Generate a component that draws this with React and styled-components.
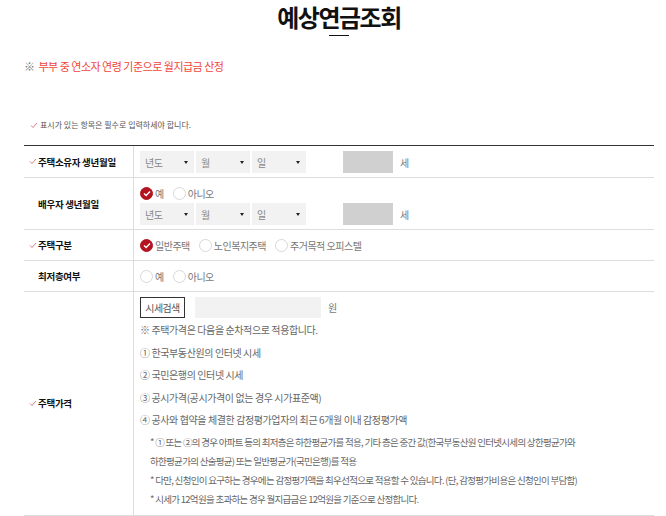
import styled, { createGlobalStyle } from "styled-components";

const GlobalStyle = createGlobalStyle`
  body {
    margin: 0;
    background: #fff;
    font-family: "Noto Sans CJK KR", "Noto Sans", sans-serif;
    color: #666;
  }
`;

const Page = styled.div`
  padding: 0 12px 0 24px;
`;

const Title = styled.h1`
  margin: 0;
  padding-top: 2px;
  text-align: center;
  font-size: 24px;
  line-height: 30px;
  font-weight: 700;
  letter-spacing: -1.5px;
  color: #111;

  &::after {
    content: "";
    display: block;
    width: 20px;
    height: 1px;
    background: #111;
    margin: 3px auto 0;
  }
`;

const Notice = styled.p`
  margin: 22px 0 0;
  font-size: 11px;
  line-height: 16px;
  letter-spacing: -0.5px;
  color: #f0473a;

  span {
    color: #777;
    margin-right: 4px;
  }
`;

const Required = styled.p`
  margin: 45px 0 0;
  display: flex;
  align-items: center;
  gap: 2px;
  padding-left: 6px;
  font-size: 8px;
  line-height: 12px;
  letter-spacing: 0;
  color: #555;
`;

const Table = styled.div`
  margin-top: 14px;
  border-top: 1px solid #333;
`;

const Row = styled.div`
  display: grid;
  grid-template-columns: 110px 1fr;
  border-bottom: 1px solid #ddd;
`;

const Label = styled.div`
  display: flex;
  align-items: center;
  gap: 1px;
  padding-left: 5px;
  border-right: 1px solid #ddd;
  font-size: 9.5px;
  font-weight: 700;
  letter-spacing: -0.3px;
  color: #111;
`;

const Check = styled.svg`
  width: 8px;
  height: 7px;
  flex: none;
  visibility: ${(p) => (p.$show ? "visible" : "hidden")};
`;

const Value = styled.div`
  padding: ${(p) => p.$pad || "5px 0 4px 6px"};
  display: flex;
  flex-direction: column;
  justify-content: center;
  gap: 1px;
  font-size: 10px;
  letter-spacing: -0.4px;
`;

const Line = styled.div`
  display: flex;
  align-items: center;
  gap: ${(p) => p.$gap || "2px"};
  min-height: ${(p) => p.$h || "22px"};
`;

const Select = styled.div`
  width: 54px;
  height: 22px;
  box-sizing: border-box;
  padding: 0 6px 0 5px;
  background: #f2f2f2;
  display: flex;
  align-items: center;
  justify-content: space-between;
  color: #888;

  &::after {
    content: "";
    border-left: 2px solid transparent;
    border-right: 2px solid transparent;
    border-top: 3px solid #222;
  }
`;

const AgeBox = styled.div`
  width: 50px;
  height: 22px;
  margin-left: 35px;
  background: #d0d0d0;
`;

const Unit = styled.span`
  margin-left: 5px;
  color: #777;
`;

const RadioGroup = styled.div`
  display: flex;
  align-items: center;
  gap: 9px;
  min-height: 18px;
`;

const RadioItem = styled.label`
  display: flex;
  align-items: center;
  gap: 2px;
  color: #777;
  letter-spacing: -0.5px;
`;

const Dot = styled.span`
  width: 13px;
  height: 13px;
  box-sizing: border-box;
  border-radius: 50%;
  display: flex;
  align-items: center;
  justify-content: center;
  background: ${(p) => (p.$on ? "#b3141f" : "#fff")};
  border: 1px solid ${(p) => (p.$on ? "#b3141f" : "#d8d8d8")};
`;

const SearchButton = styled.button`
  height: 21px;
  width: 45px;
  box-sizing: border-box;
  padding: 0;
  border: 1px solid #333;
  background: #fff;
  font-family: inherit;
  font-size: 10px;
  letter-spacing: -0.6px;
  color: #555;
`;

const PriceInput = styled.div`
  width: 126px;
  height: 21px;
  margin-left: 8px;
  background: #f2f2f2;
`;

const Notes = styled.div`
  line-height: 22.5px;
  color: #666;
`;

const SubNotes = styled.div`
  padding-left: 10px;
  font-size: 9.5px;
  letter-spacing: -0.7px;
  line-height: 19px;
  white-space: nowrap;
`;

const ReqMark = ({ show = true }) => (
  <Check $show={show} viewBox="0 0 8 7">
    <polyline points="1,3.5 3,5.5 7,1" fill="none" stroke="#c8707b" strokeWidth="0.9" />
  </Check>
);

const Radio = ({ on, children }) => (
  <RadioItem>
    <Dot $on={on}>
      {on && (
        <svg width="8" height="7" viewBox="0 0 8 7">
          <polyline points="1,3.6 3.1,5.6 7,1.4" fill="none" stroke="#fff" strokeWidth="1.4" />
        </svg>
      )}
    </Dot>
    {children}
  </RadioItem>
);

const DateSelects = () => (
  <Line>
    <Select>년도</Select>
    <Select>월</Select>
    <Select>일</Select>
    <AgeBox />
    <Unit>세</Unit>
  </Line>
);

const App = () => {
  return (
    <Page>
      <GlobalStyle />
      <Title>예상연금조회</Title>
      <Notice>
        <span>※</span>부부 중 연소자 연령 기준으로 월지급금 산정
      </Notice>
      <Required>
        <ReqMark />
        표시가 있는 항목은 필수로 입력하세야 합니다.
      </Required>

      <Table>
        <Row>
          <Label>
            <ReqMark />
            주택소유자 생년월일
          </Label>
          <Value>
            <DateSelects />
          </Value>
        </Row>

        <Row>
          <Label>
            <ReqMark show={false} />
            배우자 생년월일
          </Label>
          <Value $pad="6px 0 4px 6px">
            <RadioGroup>
              <Radio on>예</Radio>
              <Radio>아니오</Radio>
            </RadioGroup>
            <DateSelects />
          </Value>
        </Row>

        <Row>
          <Label>
            <ReqMark />
            주택구분
          </Label>
          <Value $pad="6px 0 6px 6px">
            <RadioGroup>
              <Radio on>일반주택</Radio>
              <Radio>노인복지주택</Radio>
              <Radio>주거목적 오피스텔</Radio>
            </RadioGroup>
          </Value>
        </Row>

        <Row>
          <Label>
            <ReqMark show={false} />
            최저층여부
          </Label>
          <Value $pad="6px 0 6px 6px">
            <RadioGroup>
              <Radio>예</Radio>
              <Radio>아니오</Radio>
            </RadioGroup>
          </Value>
        </Row>

        <Row>
          <Label>
            <ReqMark />
            주택가격
          </Label>
          <Value $pad="5px 0 6px 6px">
            <Line $h="21px">
              <SearchButton>시세검색</SearchButton>
              <PriceInput />
              <Unit>원</Unit>
            </Line>
            <Notes>
              <div>※ 주택가격은 다음을 순차적으로 적용합니다.</div>
              <div>① 한국부동산원의 인터넷 시세</div>
              <div>② 국민은행의 인터넷 시세</div>
              <div>③ 공시가격(공시가격이 없는 경우 시가표준액)</div>
              <div>④ 공사와 협약을 체결한 감정평가업자의 최근 6개월 이내 감정평가액</div>
            </Notes>
            <SubNotes>
              <div>* ① 또는 ②의 경우 아파트 등의 최저층은 하한평균가를 적용, 기타 층은 중간 값(한국부동산원 인터넷시세의 상한평균가와</div>
              <div>하한평균가의 산술평균) 또는 일반평균가(국민은행)를 적용</div>
              <div>* 다만, 신청인이 요구하는 경우에는 감정평가액을 최우선적으로 적용할 수 있습니다. (단, 감정평가비용은 신청인이 부담함)</div>
              <div>* 시세가 12억원을 초과하는 경우 월지급금은 12억원을 기준으로 산정합니다.</div>
            </SubNotes>
          </Value>
        </Row>
      </Table>
    </Page>
  );
};

export default App;
